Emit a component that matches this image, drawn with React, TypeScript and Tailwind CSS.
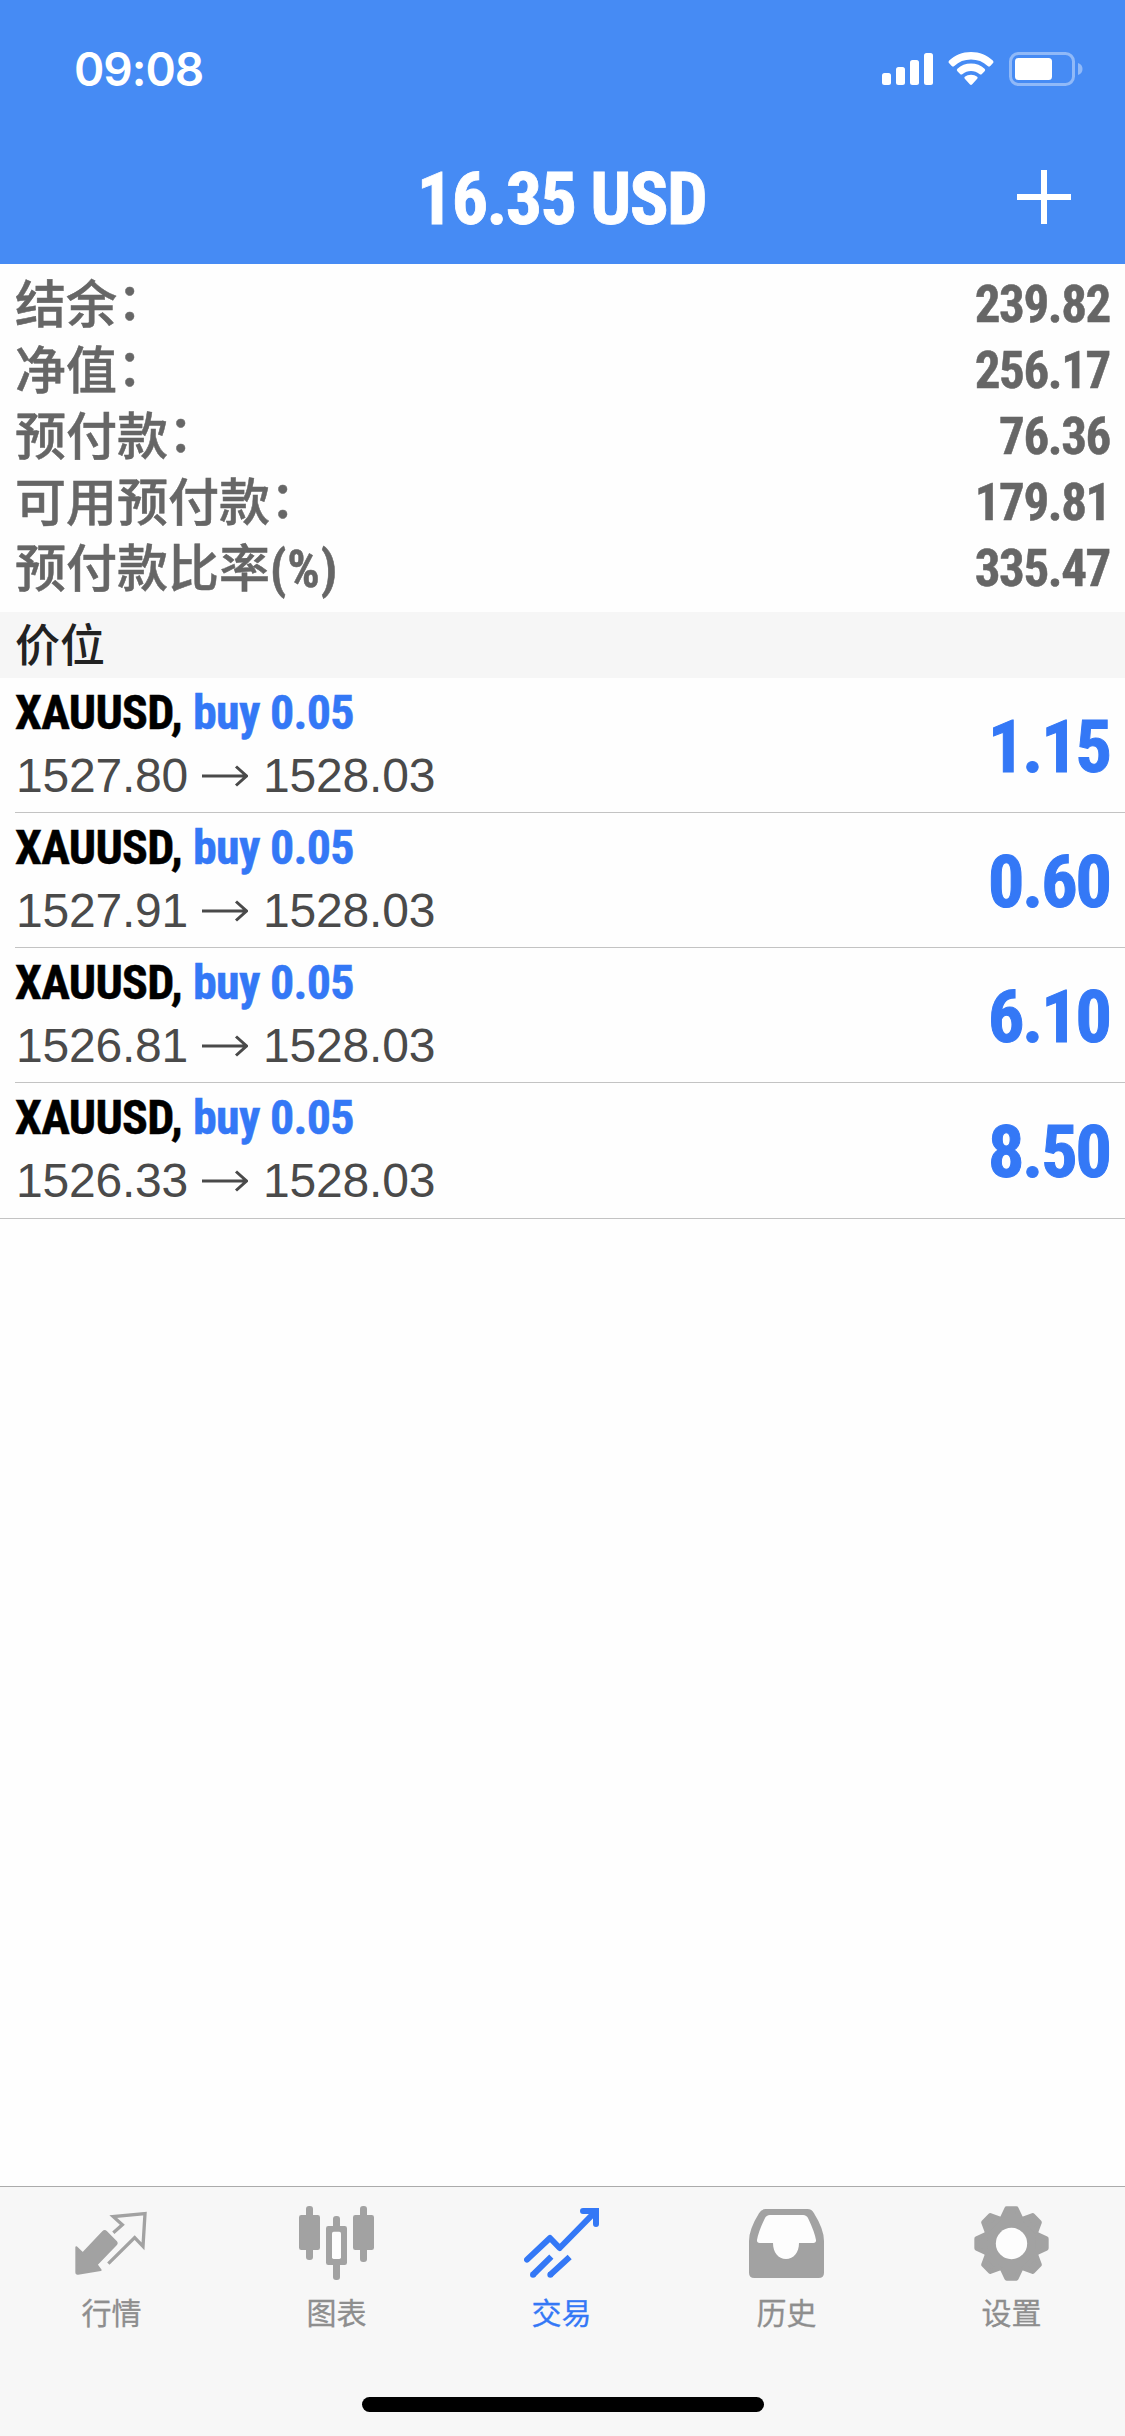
import type { ReactNode } from 'react';

const summary = [
  { label: '结余', suffix: '：', value: '239.82' },
  { label: '净值', suffix: '：', value: '256.17' },
  { label: '预付款', suffix: '：', value: '76.36' },
  { label: '可用预付款', suffix: '：', value: '179.81' },
  { label: '预付款比率', suffix: '(%)', value: '335.47' },
];

const positions = [
  { id: 1, symbol: 'XAUUSD', side: 'buy', volume: '0.05', open: '1527.80', current: '1528.03', profit: '1.15' },
  { id: 2, symbol: 'XAUUSD', side: 'buy', volume: '0.05', open: '1527.91', current: '1528.03', profit: '0.60' },
  { id: 3, symbol: 'XAUUSD', side: 'buy', volume: '0.05', open: '1526.81', current: '1528.03', profit: '6.10' },
  { id: 4, symbol: 'XAUUSD', side: 'buy', volume: '0.05', open: '1526.33', current: '1528.03', profit: '8.50' },
];

function SignalIcon() {
  return (
    <svg className="h-8 w-[51px]" viewBox="0 0 51 32" fill="currentColor">
      <rect x="0" y="20" width="9" height="12" rx="2.5" />
      <rect x="14" y="14" width="9" height="18" rx="2.5" />
      <rect x="28" y="7" width="9" height="25" rx="2.5" />
      <rect x="42" y="0" width="9" height="32" rx="2.5" />
    </svg>
  );
}

function WifiIcon() {
  return (
    <svg className="h-[34px] w-[46px]" viewBox="0 0 46 34" fill="currentColor">
      <path d="M23 0c8.700 0 16.200 3.200 21.800 8.600q1.300 1.400 0 2.700l-2.500 2.600q-1.300 1.200-2.600 0C35.200 9.700 29.500 7.500 23 7.500S10.800 9.700 6.300 13.900q-1.300 1.200-2.600 0L1.200 11.300q-1.300-1.300 0-2.700C6.800 3.200 14.300 0 23 0Z" />
      <path d="M23 11.500c5.300 0 10 1.900 13.600 5.200q1.300 1.300 0 2.600l-2.700 2.700q-1.200 1.100-2.500 0C29 20 26.200 19 23 19s-6 1-8.400 3q-1.300 1.100-2.500 0l-2.700-2.700q-1.300-1.300 0-2.600C13 13.400 17.700 11.500 23 11.500Z" />
      <path d="M23 22.800c2.500 0 4.500.8 6.200 2q1 1 0 2l-5.200 5.800q-1 .8-2 0l-5.200-5.800q-1-1 0-2c1.700-1.200 3.700-2 6.200-2Z" />
    </svg>
  );
}

function BatteryIcon() {
  return (
    <svg className="h-[34px] w-[74px]" viewBox="0 0 74 34" fill="none">
      <rect x="1.5" y="1.5" width="63" height="31" rx="8" stroke="white" strokeOpacity="0.4" strokeWidth="3" />
      <rect x="6" y="6" width="37" height="22" rx="3.5" fill="white" />
      <path d="M69 11c3 1 4.500 3.300 4.500 6s-1.500 5-4.500 6Z" fill="white" fillOpacity="0.4" />
    </svg>
  );
}

function QuotesIcon() {
  return (
    <svg className="size-[75px]" viewBox="0 0 225 225" fill="none" stroke="currentColor">
      <path
        d="M7 124 26 142 87 78Q92 73 97 78L126 107Q130 112 126 116L68 176 80 192 12 203Q7 204 7 199Z"
        fill="currentColor"
        strokeWidth="6"
        strokeLinejoin="round"
      />
      <path d="M118 80 145 56 118 32 213 23 207 121 182 95 103 173" strokeWidth="10" />
    </svg>
  );
}

function ChartIcon() {
  return (
    <svg className="size-[75px]" viewBox="0 0 225 225" fill="currentColor">
      <rect x="21" y="0" width="21" height="162" rx="9" />
      <rect x="0" y="27" width="63" height="105" rx="7" />
      <rect x="102" y="30" width="21" height="192" rx="9" />
      <rect x="81" y="60" width="63" height="117" rx="7" />
      <rect x="99" y="77" width="27" height="82" rx="5" fill="#fdfdfd" />
      <rect x="183" y="0" width="21" height="168" rx="9" />
      <rect x="162" y="27" width="63" height="105" rx="7" />
    </svg>
  );
}

function TradeIcon() {
  return (
    <svg className="size-[75px]" viewBox="0 0 225 225" fill="none" stroke="currentColor" strokeWidth="18">
      <path d="M9 161 78 96 107 126 212 19" strokeLinecap="round" strokeLinejoin="round" />
      <path d="M177 15H216V54" strokeLinecap="round" />
      <path d="M26 207 82 152M78 207 137 153" />
      <circle cx="27" cy="206" r="9" fill="currentColor" stroke="none" />
      <circle cx="79" cy="206" r="9" fill="currentColor" stroke="none" />
    </svg>
  );
}

function HistoryIcon() {
  return (
    <svg className="size-[75px]" viewBox="0 0 225 225" fill="currentColor">
      <path d="M50 9H175Q189 9 195 22 225 70 225 105V200Q225 216 209 216H16Q0 216 0 200V105Q0 70 30 22 36 9 50 9Z" />
      <path
        d="M63 27H162Q173 27 178 38 197 78 201 102 202 111 193 111H150C150 140 134 159 111 159S72 140 72 111H32Q23 111 24 102 28 78 47 38 52 27 63 27Z"
        fill="#fdfdfd"
      />
    </svg>
  );
}

function SettingsIcon() {
  const teeth = [0, 45, 90, 135, 180, 225, 270, 315];
  return (
    <svg className="size-[75px]" viewBox="0 0 225 225" fill="currentColor">
      <circle cx="112.5" cy="112.5" r="87" />
      {teeth.map((angle) => (
        <path
          key={angle}
          d="M98 8H127L139 34H86Z"
          transform={`rotate(${angle} 112.5 112.5)`}
          stroke="currentColor"
          strokeWidth="14"
          strokeLinejoin="round"
        />
      ))}
      <circle cx="112.5" cy="112.5" r="47" fill="#fdfdfd" />
    </svg>
  );
}

const tabs: { label: string; icon: ReactNode; active?: boolean }[] = [
  { label: '行情', icon: <QuotesIcon /> },
  { label: '图表', icon: <ChartIcon /> },
  { label: '交易', icon: <TradeIcon />, active: true },
  { label: '历史', icon: <HistoryIcon /> },
  { label: '设置', icon: <SettingsIcon /> },
];

function Header() {
  return (
    <header className="h-[264px] bg-[#468bf4] text-white">
      <div className="flex h-[138px] items-center justify-between pl-[74px] pr-[42px]">
        <span className="font-['Inter',sans-serif] text-[46px] font-semibold leading-none tracking-[-1px]">09:08</span>
        <div className="flex items-center">
          <SignalIcon />
          <div className="ml-[15px] mr-[15px] flex">
            <WifiIcon />
          </div>
          <BatteryIcon />
        </div>
      </div>
      <div className="grid h-[118px] grid-cols-[1fr_auto_1fr] items-center pr-[54px]">
        <span />
        <h1 className="pl-[52px] pt-[6px] text-[72px] font-bold leading-none tracking-[-1.6px] [-webkit-text-stroke:0.8px_currentColor]">
          16.35 USD
        </h1>
        <button className="justify-self-end" aria-label="New order">
          <svg className="size-[54px]" viewBox="0 0 54 54" stroke="currentColor" strokeWidth="6">
            <path d="M27 0v54M0 27h54" />
          </svg>
        </button>
      </div>
    </header>
  );
}

function PositionRow({ position, last }: { position: (typeof positions)[number]; last: boolean }) {
  return (
    <li>
      <div className={last ? 'flex h-[135px] justify-between pl-[15px] pr-[15px]' : 'flex h-[134px] justify-between pl-[15px] pr-[15px]'}>
        <div className="pt-1">
          <div className="flex h-[62px] items-center gap-[11px] text-[48px] font-bold leading-none tracking-[-0.7px] [-webkit-text-stroke:0.5px_currentColor]">
            <span className="text-black">{position.symbol},</span>
            <span className="text-[#3478f6]">
              {position.side} {position.volume}
            </span>
          </div>
          <div className="flex h-[64px] items-center pl-px font-['Liberation_Sans',sans-serif] text-[48px] leading-none tracking-[-0.2px] text-[#4a4a4a]">
            <span>{position.open}</span>
            <svg className="ml-[14px] mr-[15px] h-6 w-[46px]" viewBox="0 0 46 24" fill="none" stroke="currentColor" strokeWidth="3">
              <path d="M0 12h44M34 2.5 44.5 12 34 21.5" />
            </svg>
            <span>{position.current}</span>
          </div>
        </div>
        <span className="pt-8 text-[72px] font-bold leading-[76px] tracking-[-2px] text-[#3478f6] [-webkit-text-stroke:1px_currentColor]">
          {position.profit}
        </span>
      </div>
      <div className={last ? 'h-px bg-[#c3c3c3]' : 'ml-[15px] h-px bg-[#c3c3c3]'} />
    </li>
  );
}

export default function App() {
  return (
    <div className="flex h-[2436px] w-[1125px] flex-col overflow-hidden bg-[#fefefe] font-['Roboto_Condensed','Noto_Sans_CJK_SC',sans-serif]">
      <Header />

      {/* Account summary */}
      <dl className="h-[348px] pl-[15px] pr-[15px] pt-[9px] text-[51px] leading-[66px] text-[#666]">
        {summary.map((row) => (
          <div key={row.label} className="flex h-[66px] justify-between">
            <dt className="font-medium [-webkit-text-stroke:0.5px_currentColor]">
              {row.label}
              {row.suffix === '：' ? (
                <span className="inline-block -translate-y-[3px]">{row.suffix}</span>
              ) : (
                <span className="font-bold tracking-[0.8px]">{row.suffix}</span>
              )}
            </dt>
            <dd className="-mt-px font-bold tracking-[-1.4px] [-webkit-text-stroke:0.5px_currentColor]">{row.value}</dd>
          </div>
        ))}
      </dl>

      {/* Open positions */}
      <h2 className="flex h-[66px] items-center bg-[#f6f6f6] pl-[15px] pt-[3px] text-[45px] font-medium leading-none text-[#222]">
        价位
      </h2>
      <ul className="flex-1">
        {positions.map((p, i) => (
          <PositionRow key={p.id} position={p} last={i === positions.length - 1} />
        ))}
      </ul>

      {/* Tab bar */}
      <nav className="flex h-[250px] flex-col items-center border-t border-[#ababab] bg-[#f7f7f7]">
        <div className="mr-[2px] grid w-[1125px] grid-cols-5 pt-[19px]">
          {tabs.map((tab) => (
            <button
              key={tab.label}
              className={
                tab.active
                  ? 'flex flex-col items-center text-[#3478f6]'
                  : 'flex flex-col items-center text-[#a2a2a2]'
              }
            >
              {tab.icon}
              <span
                className={
                  tab.active
                    ? 'mt-[18px] text-[30px] leading-[30px] [-webkit-text-stroke:0.3px_currentColor]'
                    : 'mt-[18px] text-[30px] leading-[30px] text-[#8e8e8e] [-webkit-text-stroke:0.3px_currentColor]'
                }
              >
                {tab.label}
              </span>
            </button>
          ))}
        </div>
        <div className="mt-auto mb-6 h-[15px] w-[402px] rounded-full bg-black" />
      </nav>
    </div>
  );
}
